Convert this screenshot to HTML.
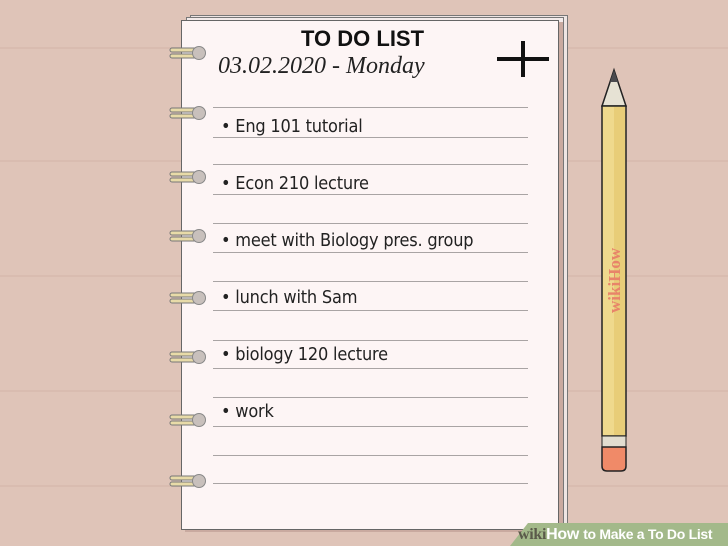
<!DOCTYPE html>
<html><head><style>
body{margin:0;width:728px;height:546px;overflow:hidden;background:#dfc4b8;position:relative;font-family:"Liberation Sans",sans-serif}
.a{position:absolute}
.stripe{position:absolute;left:0;width:728px;height:2px;background:#d9bcb0}
.line{position:absolute;left:213px;width:315px;height:1px;background:#a9a4a4}
.item{position:absolute;left:221px;font-size:18px;color:#222;font-family:"DejaVu Sans Condensed","Liberation Sans",sans-serif;font-stretch:condensed;letter-spacing:-0.2px}
</style></head><body>
<div class="stripe" style="top:47px"></div>
<div class="stripe" style="top:160px"></div>
<div class="stripe" style="top:275px"></div>
<div class="stripe" style="top:390px"></div>
<div class="stripe" style="top:485px"></div>
<div class="a" style="left:190px;top:15px;width:376px;height:512px;background:#eee5e3;border:1px solid #777"></div>
<div class="a" style="left:186px;top:17px;width:376px;height:512px;background:#f3ebea;border:1px solid #777"></div>
<div class="a" style="left:181px;top:20px;width:376px;height:508px;background:#fdf5f5;border:1px solid #666;box-shadow:4px 2px 0 #c9aaa0"></div>
<div class="a" style="left:301px;top:26px;font-size:22px;font-weight:bold;color:#111">TO DO LIST</div>
<div class="a" style="left:218px;top:53px;font-size:24px;font-style:italic;color:#222;font-family:'Liberation Serif',serif">03.02.2020 - Monday</div>
<div class="a" style="left:497px;top:57px;width:52px;height:4px;background:#111"></div>
<div class="a" style="left:521px;top:41px;width:4px;height:36px;background:#111"></div>
<div class="line" style="top:107px"></div><div class="line" style="top:137px"></div>
<div class="line" style="top:164px"></div><div class="line" style="top:194px"></div>
<div class="line" style="top:223px"></div><div class="line" style="top:252px"></div>
<div class="line" style="top:281px"></div><div class="line" style="top:310px"></div>
<div class="line" style="top:340px"></div><div class="line" style="top:368px"></div>
<div class="line" style="top:397px"></div><div class="line" style="top:426px"></div>
<div class="line" style="top:455px"></div><div class="line" style="top:483px"></div>
<div class="item" style="top:116px">• Eng 101 tutorial</div>
<div class="item" style="top:173px">• Econ 210 lecture</div>
<div class="item" style="top:230px">• meet with Biology pres. group</div>
<div class="item" style="top:287px">• lunch with Sam</div>
<div class="item" style="top:344px">• biology 120 lecture</div>
<div class="item" style="top:401px">• work</div>
<svg class="a" style="left:166px;top:0" width="44" height="546">
<defs><g id="r"><rect x="4" y="-5" width="28" height="4" rx="2" fill="#e8dba8" stroke="#777" stroke-width="1"/><rect x="4" y="1" width="28" height="4" rx="2" fill="#e8dba8" stroke="#777" stroke-width="1"/><circle cx="33" cy="0" r="6.5" fill="#c8c0bc" stroke="#888"/></g></defs>
<use href="#r" y="53"/><use href="#r" y="113"/><use href="#r" y="177"/><use href="#r" y="236"/><use href="#r" y="298"/><use href="#r" y="357"/><use href="#r" y="420"/><use href="#r" y="481"/>
</svg>
<svg class="a" style="left:596px;top:66px" width="40" height="412">
<path d="M6 40 L18 4 L30 40 Z" fill="#e6e2d4" stroke="#222" stroke-width="1.5"/>
<path d="M14 16 L18 4 L22 16 Z" fill="#4a4a4e"/>
<rect x="6" y="40" width="24" height="330" fill="#efd98d" stroke="#222" stroke-width="1.5"/>
<rect x="18" y="41" width="11" height="328" fill="#e8cd78"/>
<rect x="6" y="370" width="24" height="11" fill="#e2ddd0" stroke="#222" stroke-width="1"/>
<path d="M6 381 H30 V400 Q30 405 25 405 H11 Q6 405 6 400 Z" fill="#f08a68" stroke="#222" stroke-width="1.5"/>
<text x="0" y="0" transform="translate(24 247) rotate(-90)" font-family="Liberation Serif,serif" font-weight="bold" font-size="17" fill="#e8846a">wikiHow</text>
</svg>
<svg class="a" style="left:0;top:0" width="728" height="546"><path d="M528 523 H728 V546 H510 Z" fill="#a3b98a"/></svg>
<div class="a" style="left:518px;top:526px;font-size:16px;font-weight:bold;color:#fff;white-space:nowrap;letter-spacing:-0.3px"><span style="font-family:'Liberation Serif',serif;color:#5a5a4a">wiki</span>How <span style="font-size:14px">to Make a To Do List</span></div>
</body></html>
